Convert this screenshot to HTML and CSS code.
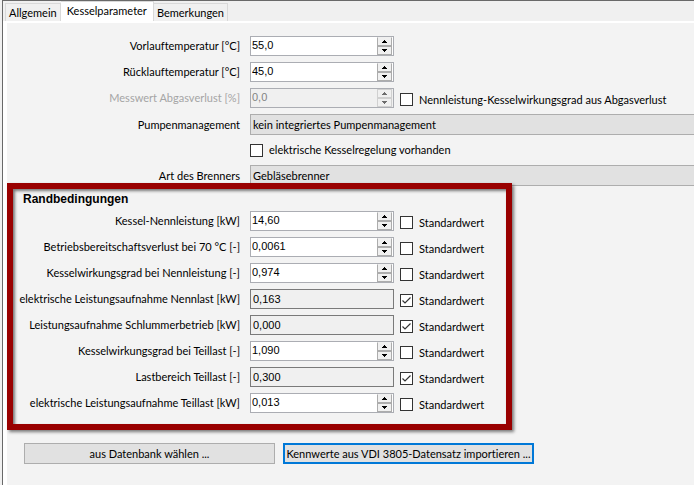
FILE: index.html
```
<!DOCTYPE html>
<html lang="de">
<head>
<meta charset="utf-8">
<title>Kesselparameter</title>
<link rel="stylesheet" href="styles.css">
</head>
<body>
<main class="window">
  <nav class="tabs" role="tablist">
    <button class="tab" role="tab">Allgemein</button>
    <button class="tab active" role="tab" aria-selected="true">Kesselparameter</button>
    <button class="tab" role="tab">Bemerkungen</button>
  </nav>
  <form class="panel">
    <div class="row">
      <label class="name" for="vorlauf">Vorlauftemperatur [°C]</label>
      <div class="spin"><input id="vorlauf" type="text" value="55,0"><span class="arrows"><button type="button" aria-label="mehr"><svg viewBox="0 0 5 3"><path d="M2 0h1v1h1v1h1v1H0V2h1V1h1z"/></svg></button><button type="button" aria-label="weniger"><svg viewBox="0 0 5 3"><path d="M0 0h5v1H4v1H3v1H2V2H1V1H0z"/></svg></button></span></div>
    </div>
    <div class="row">
      <label class="name" for="ruecklauf">Rücklauftemperatur [°C]</label>
      <div class="spin"><input id="ruecklauf" type="text" value="45,0"><span class="arrows"><button type="button" aria-label="mehr"><svg viewBox="0 0 5 3"><path d="M2 0h1v1h1v1h1v1H0V2h1V1h1z"/></svg></button><button type="button" aria-label="weniger"><svg viewBox="0 0 5 3"><path d="M0 0h5v1H4v1H3v1H2V2H1V1H0z"/></svg></button></span></div>
    </div>
    <div class="row">
      <label class="name disabled" for="abgas">Messwert Abgasverlust [%]</label>
      <div class="spin disabled"><input id="abgas" type="text" value="0,0" disabled><span class="arrows"><button type="button" disabled aria-label="mehr"><svg viewBox="0 0 5 3"><path d="M2 0h1v1h1v1h1v1H0V2h1V1h1z"/></svg></button><button type="button" disabled aria-label="weniger"><svg viewBox="0 0 5 3"><path d="M0 0h5v1H4v1H3v1H2V2H1V1H0z"/></svg></button></span></div>
      <label class="check"><input type="checkbox">Nennleistung-Kesselwirkungsgrad aus Abgasverlust</label>
    </div>
    <div class="row choice">
      <label class="name" for="pumpe">Pumpenmanagement</label>
      <select id="pumpe"><option>kein integriertes Pumpenmanagement</option></select>
    </div>
    <div class="row single">
      <label class="check"><input type="checkbox">elektrische Kesselregelung vorhanden</label>
    </div>
    <div class="row burner">
      <label class="name" for="brenner">Art des Brenners</label>
      <select id="brenner"><option>Gebläsebrenner</option></select>
    </div>
    <section class="group">
      <h2>Randbedingungen</h2>
      <div class="row">
        <label class="name" for="p1">Kessel-Nennleistung [kW]</label>
        <div class="spin"><input id="p1" type="text" value="14,60"><span class="arrows"><button type="button" aria-label="mehr"><svg viewBox="0 0 5 3"><path d="M2 0h1v1h1v1h1v1H0V2h1V1h1z"/></svg></button><button type="button" aria-label="weniger"><svg viewBox="0 0 5 3"><path d="M0 0h5v1H4v1H3v1H2V2H1V1H0z"/></svg></button></span></div>
        <label class="check"><input type="checkbox">Standardwert</label>
      </div>
      <div class="row">
        <label class="name" for="p2">Betriebsbereitschaftsverlust bei 70 °C [-]</label>
        <div class="spin"><input id="p2" type="text" value="0,0061"><span class="arrows"><button type="button" aria-label="mehr"><svg viewBox="0 0 5 3"><path d="M2 0h1v1h1v1h1v1H0V2h1V1h1z"/></svg></button><button type="button" aria-label="weniger"><svg viewBox="0 0 5 3"><path d="M0 0h5v1H4v1H3v1H2V2H1V1H0z"/></svg></button></span></div>
        <label class="check"><input type="checkbox">Standardwert</label>
      </div>
      <div class="row">
        <label class="name" for="p3">Kesselwirkungsgrad bei Nennleistung [-]</label>
        <div class="spin"><input id="p3" type="text" value="0,974"><span class="arrows"><button type="button" aria-label="mehr"><svg viewBox="0 0 5 3"><path d="M2 0h1v1h1v1h1v1H0V2h1V1h1z"/></svg></button><button type="button" aria-label="weniger"><svg viewBox="0 0 5 3"><path d="M0 0h5v1H4v1H3v1H2V2H1V1H0z"/></svg></button></span></div>
        <label class="check"><input type="checkbox">Standardwert</label>
      </div>
      <div class="row">
        <label class="name" for="p4">elektrische Leistungsaufnahme Nennlast [kW]</label>
        <input class="fixed" id="p4" type="text" value="0,163" readonly>
        <label class="check"><input type="checkbox" checked>Standardwert</label>
      </div>
      <div class="row">
        <label class="name" for="p5">Leistungsaufnahme Schlummerbetrieb [kW]</label>
        <input class="fixed" id="p5" type="text" value="0,000" readonly>
        <label class="check"><input type="checkbox" checked>Standardwert</label>
      </div>
      <div class="row">
        <label class="name" for="p6">Kesselwirkungsgrad bei Teillast [-]</label>
        <div class="spin"><input id="p6" type="text" value="1,090"><span class="arrows"><button type="button" aria-label="mehr"><svg viewBox="0 0 5 3"><path d="M2 0h1v1h1v1h1v1H0V2h1V1h1z"/></svg></button><button type="button" aria-label="weniger"><svg viewBox="0 0 5 3"><path d="M0 0h5v1H4v1H3v1H2V2H1V1H0z"/></svg></button></span></div>
        <label class="check"><input type="checkbox">Standardwert</label>
      </div>
      <div class="row">
        <label class="name" for="p7">Lastbereich Teillast [-]</label>
        <input class="fixed" id="p7" type="text" value="0,300" readonly>
        <label class="check"><input type="checkbox" checked>Standardwert</label>
      </div>
      <div class="row">
        <label class="name" for="p8">elektrische Leistungsaufnahme Teillast [kW]</label>
        <div class="spin"><input id="p8" type="text" value="0,013"><span class="arrows"><button type="button" aria-label="mehr"><svg viewBox="0 0 5 3"><path d="M2 0h1v1h1v1h1v1H0V2h1V1h1z"/></svg></button><button type="button" aria-label="weniger"><svg viewBox="0 0 5 3"><path d="M0 0h5v1H4v1H3v1H2V2H1V1H0z"/></svg></button></span></div>
        <label class="check"><input type="checkbox">Standardwert</label>
      </div>
    </section>
    <div class="actions">
      <button type="button" class="action">aus Datenbank wählen ...</button>
      <button type="button" class="action default">Kennwerte aus VDI 3805-Datensatz importieren ...</button>
    </div>
  </form>
</main>
</body>
</html>
```
FILE: styles.css
```
*, *::after {
  box-sizing: border-box;
}

body {
  margin: 0;
  background: #f0f0f0;
  color: #000;
  overflow: hidden;
}

body, button, select {
  font-family: "Lato", "Liberation Sans", sans-serif;
  font-size: 11px;
  line-height: 16px;
  font-variant-ligatures: none;
}

input {
  font-family: "Liberation Sans", sans-serif;
  font-size: 11px;
  line-height: 16px;
}

.window {
  display: flex;
  flex-direction: column;
  min-height: 100vh;
  margin-left: 2px;
  border-top: 1px solid #696969;
  border-left: 1px solid #696969;
}

.tabs {
  display: flex;
  align-items: flex-end;
  height: 20px;
  padding-left: 2px;
}

.tab {
  height: 18px;
  padding: 0 3px;
  border: 1px solid #d9d9d9;
  border-bottom: 0;
  background: #f0f0f0;
}

.tab + .tab {
  border-left: 0;
}

.tab.active {
  height: 20px;
  padding: 0 6px 2px;
  background: #fff;
}

.panel {
  flex: 1;
  padding-top: 10px;
  border-top: 2px solid #fff;
  border-left: 4px solid #fff;
  background: #f3f3f3;
}

.row {
  display: flex;
  align-items: center;
  height: 26px;
}

.name {
  flex: none;
  width: 233px;
  margin-right: 10px;
  text-align: right;
  white-space: nowrap;
}

.name.disabled {
  color: #a5a5a5;
}

.spin {
  display: flex;
  flex: none;
  width: 144px;
  height: 20px;
  padding-right: 1px;
  border: 1px solid #abadb3;
  background: #fff;
}

.spin input {
  flex: 1;
  min-width: 0;
  padding: 0 1px 2px;
  border: 0;
  background: none;
  outline: 0;
}

.arrows {
  display: flex;
  flex-direction: column;
  width: 15px;
  background: #f0f0f0;
}

.arrows button {
  display: flex;
  flex: 1;
  align-items: center;
  justify-content: center;
  padding: 0;
  border: 1px solid #acacac;
  border-top-color: #f0f0f0;
  background: #f0f0f0;
}

.arrows button + button {
  border-top-color: #acacac;
}

.arrows svg {
  width: 5px;
  height: 3px;
  shape-rendering: crispEdges;
}

.spin.disabled {
  background: #f0f0f0;
}

.spin.disabled input {
  color: #838383;
}

.spin.disabled button {
  border-color: #d0d0d0;
}

.spin.disabled svg {
  fill: #6d6d6d;
}

.fixed {
  flex: none;
  width: 144px;
  height: 20px;
  padding: 0 2px;
  border: 1px solid #7a7a7a;
  background: #f0f0f0;
  outline: 0;
}

.check {
  display: flex;
  align-items: center;
  gap: 6px;
  padding-top: 3px;
  margin-left: 6px;
  white-space: nowrap;
}

.check input {
  appearance: none;
  width: 13px;
  height: 13px;
  margin: 0;
  border: 1px solid #333;
  background: #fff;
}

.check input:checked {
  background: #fff url("data:image/svg+xml,%3Csvg xmlns='http://www.w3.org/2000/svg' viewBox='0 0 11 11'%3E%3Cpath d='M1.5 5.5l2.5 2.500 5.500-5.500' fill='none' stroke='%23333' stroke-width='1.200'/%3E%3C/svg%3E");
}

.single .check {
  margin-left: 243px;
  padding-top: 0;
}

.choice {
  height: 25px;
  margin-top: 1px;
}

.burner {
  height: 25px;
}

select {
  flex: 1;
  min-width: 0;
  height: 21px;
  padding: 0 2px;
  border: 1px solid #adadad;
  border-right: 0;
  border-radius: 0;
  background: #e1e1e1;
  color: #000;
  appearance: none;
}

.group {
  position: relative;
}

/* Highlight frame lying over the neighbouring rows */
.group::after {
  content: "";
  position: absolute;
  top: -5px;
  bottom: -14px;
  left: 0;
  width: 505px;
  border: 6px solid #900;
  box-shadow: 2px 2px 3px rgba(0, 0, 0, 0.5), inset 2px 2px 3px rgba(0, 0, 0, 0.5);
  pointer-events: none;
}

h2 {
  height: 20px;
  margin: 0;
  padding: 3px 0 0 16px;
  font-family: "Liberation Sans", sans-serif;
  font-size: 12px;
  line-height: 16px;
}

.actions {
  display: grid;
  grid-template-columns: 251px 251px;
  gap: 8px;
  padding: 27px 0 16px 17px;
}

.action {
  height: 21px;
  padding: 0;
  border: 1px solid #adadad;
  background: #e1e1e1;
  white-space: nowrap;
}

.action.default {
  border: 2px solid #0078d7;
}
```
